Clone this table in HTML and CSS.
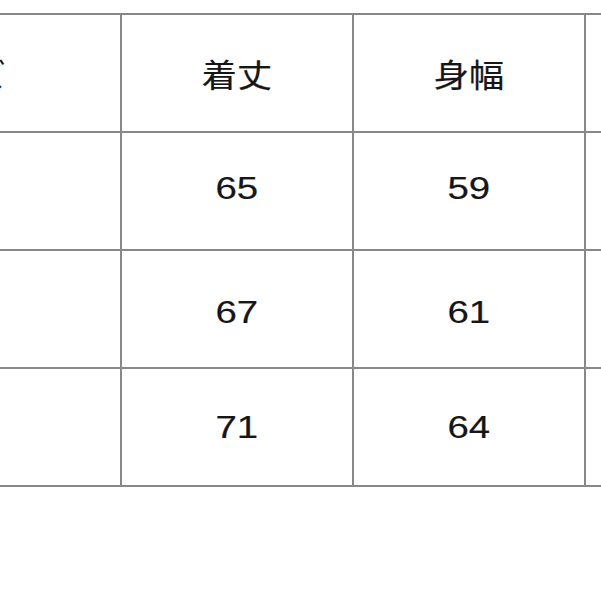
FILE: index.html
```html
<!DOCTYPE html>
<html lang="ja">
<head>
<meta charset="utf-8">
<link rel="stylesheet" href="styles.css">
</head>
<body>
<div class="page">
  <div class="grid">
    <div class="cell"><span class="txt jp">サイズ</span></div>
    <div class="cell"><span class="txt jp">着丈</span></div>
    <div class="cell"><span class="txt jp">身幅</span></div>
    <div class="cell"></div>

    <div class="cell"></div>
    <div class="cell"><span class="txt num up">65</span></div>
    <div class="cell"><span class="txt num up">59</span></div>
    <div class="cell"></div>

    <div class="cell"></div>
    <div class="cell"><span class="txt num down">67</span></div>
    <div class="cell"><span class="txt num down">61</span></div>
    <div class="cell"></div>

    <div class="cell"></div>
    <div class="cell"><span class="txt num">71</span></div>
    <div class="cell"><span class="txt num">64</span></div>
    <div class="cell"></div>
  </div>
</div>
</body>
</html>
```

FILE: styles.css
```css
html, body {
  margin: 0;
  padding: 0;
  background: #ffffff;
  overflow: hidden;
}

.page {
  width: 601px;
  height: 601px;
  overflow: hidden;
  padding-top: 13px;
  box-sizing: border-box;
}

.grid {
  display: grid;
  grid-template-columns: 332px 230px 230px 230px;
  grid-auto-rows: 116px;
  gap: 2px;
  padding: 2px;
  margin-left: -214px;
  width: max-content;
  background: #888888;
}

.cell {
  background: #ffffff;
  display: flex;
  align-items: center;
  justify-content: center;
}

.txt {
  display: inline-block;
  color: #161616;
  font-family: "Liberation Sans", "Noto Sans CJK JP", sans-serif;
  -webkit-text-stroke: 0.2px #161616;
}

.jp {
  font-size: 32px;
  transform: scaleX(1.1);
}

.num {
  font-size: 32px;
  transform: scaleX(1.2);
}

.num.up {
  transform: translateY(-3px) scaleX(1.2);
}

.num.down {
  transform: translateY(3px) scaleX(1.2);
}
```
